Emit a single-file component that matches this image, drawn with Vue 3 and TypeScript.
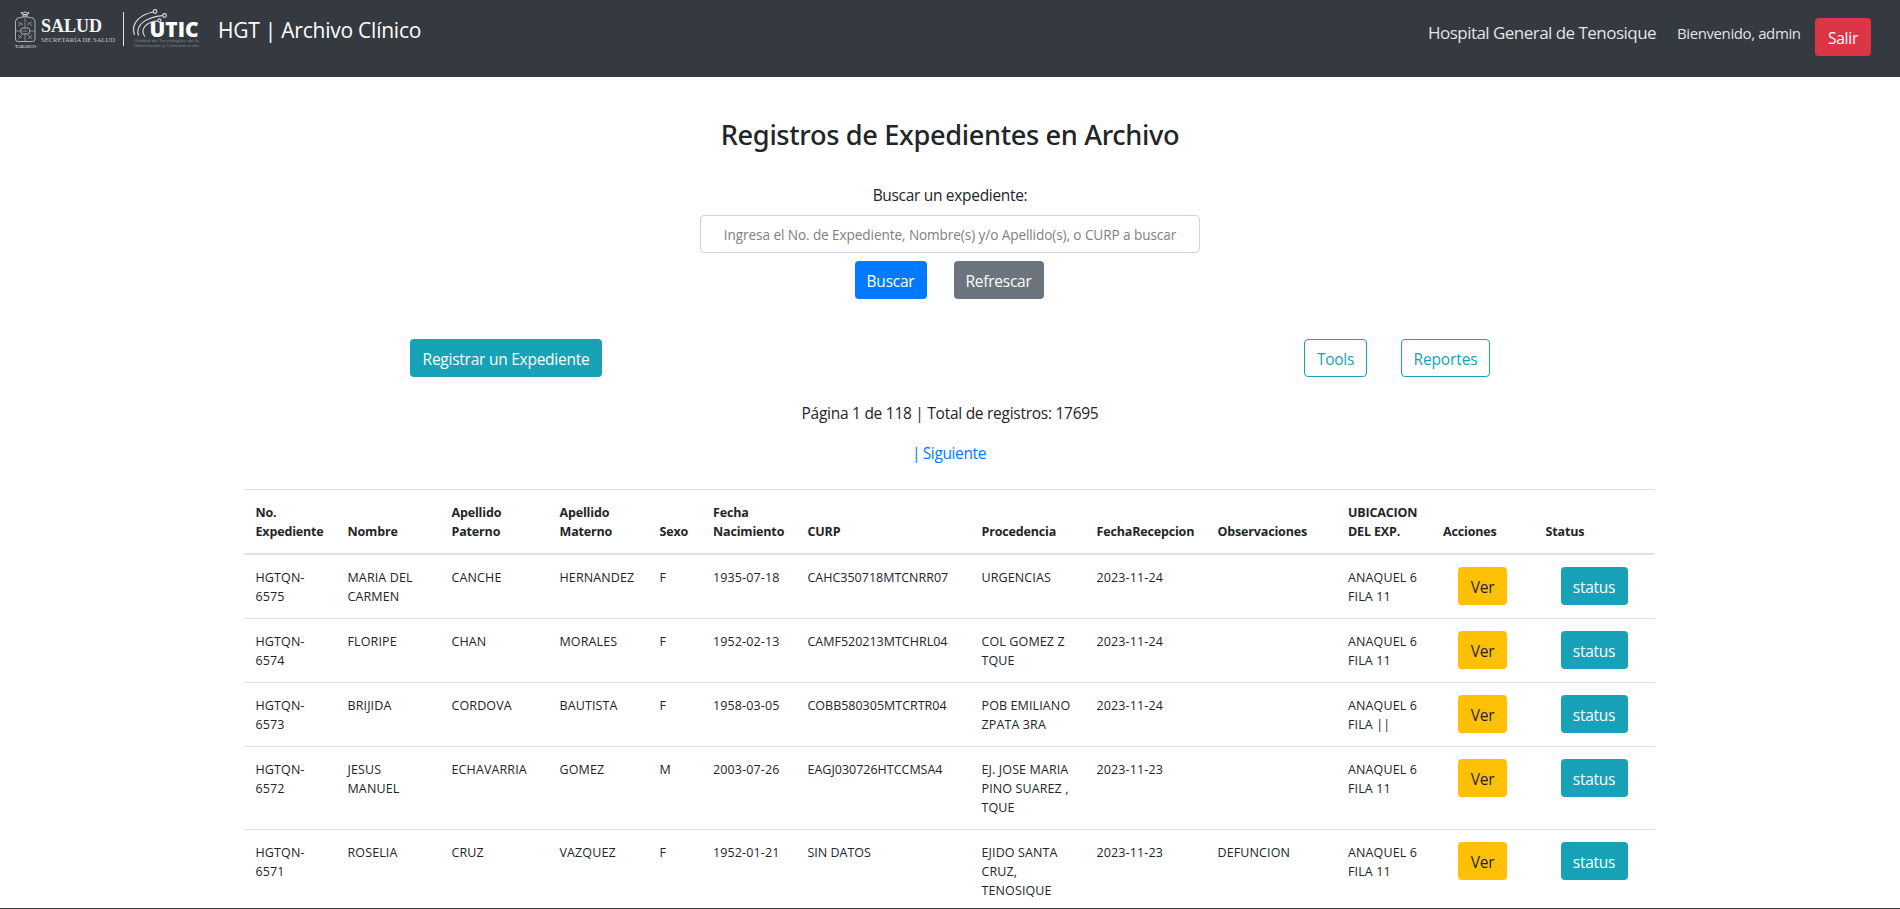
<script setup lang="ts">
interface Registro {
  expediente: string
  nombre: string
  paterno: string
  materno: string
  sexo: string
  nacimiento: string
  curp: string
  procedencia: string
  recepcion: string
  observaciones: string
  ubicacion: string
}

const columnas: string[] = [
  'No.\nExpediente',
  'Nombre',
  'Apellido\nPaterno',
  'Apellido\nMaterno',
  'Sexo',
  'Fecha\nNacimiento',
  'CURP',
  'Procedencia',
  'FechaRecepcion',
  'Observaciones',
  'UBICACION\nDEL EXP.',
  'Acciones',
  'Status',
]

const registros: Registro[] = [
  { expediente: 'HGTQN-\n6575', nombre: 'MARIA DEL\nCARMEN', paterno: 'CANCHE', materno: 'HERNANDEZ', sexo: 'F', nacimiento: '1935-07-18', curp: 'CAHC350718MTCNRR07', procedencia: 'URGENCIAS', recepcion: '2023-11-24', observaciones: '', ubicacion: 'ANAQUEL 6\nFILA 11' },
  { expediente: 'HGTQN-\n6574', nombre: 'FLORIPE', paterno: 'CHAN', materno: 'MORALES', sexo: 'F', nacimiento: '1952-02-13', curp: 'CAMF520213MTCHRL04', procedencia: 'COL GOMEZ Z\nTQUE', recepcion: '2023-11-24', observaciones: '', ubicacion: 'ANAQUEL 6\nFILA 11' },
  { expediente: 'HGTQN-\n6573', nombre: 'BRIJIDA', paterno: 'CORDOVA', materno: 'BAUTISTA', sexo: 'F', nacimiento: '1958-03-05', curp: 'COBB580305MTCRTR04', procedencia: 'POB EMILIANO\nZPATA 3RA', recepcion: '2023-11-24', observaciones: '', ubicacion: 'ANAQUEL 6\nFILA ||' },
  { expediente: 'HGTQN-\n6572', nombre: 'JESUS\nMANUEL', paterno: 'ECHAVARRIA', materno: 'GOMEZ', sexo: 'M', nacimiento: '2003-07-26', curp: 'EAGJ030726HTCCMSA4', procedencia: 'EJ. JOSE MARIA\nPINO SUAREZ ,\nTQUE', recepcion: '2023-11-23', observaciones: '', ubicacion: 'ANAQUEL 6\nFILA 11' },
  { expediente: 'HGTQN-\n6571', nombre: 'ROSELIA', paterno: 'CRUZ', materno: 'VAZQUEZ', sexo: 'F', nacimiento: '1952-01-21', curp: 'SIN DATOS', procedencia: 'EJIDO SANTA\nCRUZ,\nTENOSIQUE', recepcion: '2023-11-23', observaciones: 'DEFUNCION', ubicacion: 'ANAQUEL 6\nFILA 11' },
]

const campos: (keyof Registro)[] = [
  'expediente', 'nombre', 'paterno', 'materno', 'sexo', 'nacimiento',
  'curp', 'procedencia', 'recepcion', 'observaciones', 'ubicacion',
]
</script>

<template>
  <div class="app">
    <nav class="navbar">
      <svg class="logo" width="204" height="54" viewBox="0 0 204 54">
        <!-- Escudo -->
        <g fill="none" stroke="#b9bdc0" stroke-width="0.9">
          <path d="M21 12.5l1.5 2h5l1.5-2-2 .6-2-1.3-2 1.3zM22 16h6" stroke="#e3e5e6" />
          <path d="M17.5 18q7.500-2.500 15.500 0l2 3v18q0 2.500-2.500 2.500H18q-2.500 0-2.500-2.500V21z" />
          <path d="M25 18v23.500M15.500 31h19.500" stroke-width="0.6" />
          <rect x="21" y="28" width="8.5" height="6" rx="1.5" fill="#343a40" />
          <path d="M18 22l5 3m-5 1l4-3M27 25l5-3m-4 0l4 4M18 35l4 3m-4 1l4-4M28 35l4 4m-4 0l4-4M23 31h4" stroke-width="0.6" />
        </g>
        <text class="serif tabasco" x="15" y="47.6" textLength="21" lengthAdjust="spacingAndGlyphs">TABASCO</text>
        <text class="serif salud" x="41" y="32" textLength="61" lengthAdjust="spacingAndGlyphs">SALUD</text>
        <text class="serif secretaria" x="41" y="41.5" textLength="74" lengthAdjust="spacingAndGlyphs">SECRETARÍA DE SALUD</text>
        <rect x="123" y="12" width="1" height="34" fill="#dfe1e3" />
        <!-- Trazos de UTIC -->
        <g fill="none" stroke="#d5d8da" stroke-width="1.2">
          <path d="M134.500 35C130 22 142 14 153.200 12" />
          <path d="M138.500 35.500C135 25 146 17 162.700 15.600" />
          <path d="M145 36.500C139 29 147 21.500 158 20.800" />
          <circle cx="155" cy="11.5" r="1.800" />
          <circle cx="164.5" cy="15.5" r="1.800" />
          <circle cx="159.5" cy="20.5" r="1.600" />
        </g>
        <text class="utic" x="149.5" y="37" textLength="49" lengthAdjust="spacingAndGlyphs">UTIC</text>
        <text class="lema" x="134" y="42.3" textLength="65" lengthAdjust="spacingAndGlyphs">Unidad de Tecnologías de la</text>
        <text class="lema" x="134" y="47" textLength="65" lengthAdjust="spacingAndGlyphs">Información y Comunicación</text>
      </svg>
      <span class="brand">HGT | Archivo Clínico</span>
      <span class="hospital">Hospital General de Tenosique</span>
      <span class="welcome">Bienvenido, admin</span>
      <button class="btn btn-danger">Salir</button>
    </nav>

    <main class="main">
      <h3 class="title">Registros de Expedientes en Archivo</h3>

      <form class="search" @submit.prevent>
        <label class="search-label" for="buscar">Buscar un expediente:</label>
        <input id="buscar" class="search-input" type="text" placeholder="Ingresa el No. de Expediente, Nombre(s) y/o Apellido(s), o CURP a buscar" />
        <div class="search-actions">
          <button class="btn btn-primary">Buscar</button>
          <button class="btn btn-secondary">Refrescar</button>
        </div>
      </form>

      <div class="toolbar">
        <button class="btn btn-info btn-register">Registrar un Expediente</button>
        <div class="toolbar-right">
          <button class="btn btn-outline btn-tools">Tools</button>
          <button class="btn btn-outline btn-reports">Reportes</button>
        </div>
      </div>

      <p class="summary">Página 1 de 118 | Total de registros: 17695</p>
      <a class="next">| Siguiente</a>

      <table class="table">
        <colgroup>
          <col v-for="n in columnas.length" :key="n" :class="`c${n}`" />
        </colgroup>
        <thead>
          <tr>
            <th v-for="c in columnas" :key="c">{{ c }}</th>
          </tr>
        </thead>
        <tbody>
          <tr v-for="r in registros" :key="r.expediente">
            <td v-for="k in campos" :key="k" :class="k">{{ r[k] }}</td>
            <td class="action"><button class="btn btn-warning">Ver</button></td>
            <td class="action"><button class="btn btn-info btn-status">status</button></td>
          </tr>
        </tbody>
      </table>
    </main>
    <footer class="footer"></footer>
  </div>
</template>

<style>
body {
  margin: 0;
  background: #fff;
  overflow: hidden;
}
</style>

<style scoped>
.app {
  display: flex;
  flex-direction: column;
  height: 909px;
  overflow: hidden;
  font-family: "Open Sans", "Noto Sans", sans-serif;
  font-size: 15.5px;
  line-height: 24px;
  color: #212529;
  background: #fff;
}
.navbar {
  display: flex;
  align-items: flex-start;
  flex: none;
  height: 77px;
  padding-right: 29px;
  box-sizing: border-box;
  background: #343a40;
  color: #fff;
  white-space: nowrap;
}
.logo {
  flex: none;
}
.serif {
  font-family: "Liberation Serif", serif;
  fill: #f4f5f6;
}
.tabasco {
  font-size: 4.8px;
}
.salud {
  font-size: 18px;
  font-weight: 700;
}
.secretaria {
  font-size: 7px;
  fill: #c4c7ca;
}
.utic {
  font-family: "Open Sans", sans-serif;
  font-size: 21px;
  font-weight: 800;
  fill: #fff;
}
.lema {
  font-family: "Liberation Sans", sans-serif;
  font-size: 4.2px;
  fill: #7b8086;
}
.brand {
  margin: 15px auto 0 14px;
  width: 205px;
  font-size: 21px;
  line-height: 30px;
  letter-spacing: -0.24px;
}
.hospital {
  width: 249px;
  margin-top: 21px;
  font-size: 17px;
  letter-spacing: -0.53px;
  color: rgba(255, 255, 255, 0.88);
}
.welcome {
  width: 138px;
  margin-top: 21px;
  font-size: 15px;
  letter-spacing: -0.4px;
  color: rgba(255, 255, 255, 0.88);
}
.btn {
  box-sizing: border-box;
  height: 38px;
  padding: 2px 0 0;
  border: 1px solid transparent;
  border-radius: 4px;
  font-family: inherit;
  font-size: 15.5px;
  line-height: 24px;
  letter-spacing: -0.25px;
  text-align: center;
  white-space: nowrap;
  color: #fff;
}
.btn-danger {
  width: 56px;
  margin-top: 18px;
  background: #dc3545;
}
.btn-primary {
  width: 72px;
  background: #007bff;
}
.btn-secondary {
  width: 90px;
  background: #6c757d;
}
.btn-info {
  background: #17a2b8;
}
.btn-register {
  width: 192px;
}
.btn-outline {
  background: transparent;
  border-color: #17a2b8;
  color: #17a2b8;
}
.btn-tools {
  width: 63px;
}
.btn-reports {
  width: 89px;
  letter-spacing: -0.14px;
}
.btn-warning {
  width: 49px;
  background: #ffc107;
  color: #212529;
}
.btn-status {
  width: 67px;
}
.main {
  display: flex;
  flex-direction: column;
  align-items: center;
  flex: 1;
  min-height: 0;
  overflow: hidden;
}
.title {
  flex: none;
  margin: 41px 0 0;
  font-family: "Noto Sans", sans-serif;
  font-size: 27.2px;
  font-weight: 500;
  line-height: 34px;
  letter-spacing: -0.35px;
}
.search {
  display: flex;
  flex-direction: column;
  align-items: center;
  flex: none;
  margin-top: 31px;
}
.search-label {
  letter-spacing: -0.31px;
}
.search-input {
  box-sizing: border-box;
  width: 500px;
  height: 38px;
  margin-top: 8px;
  padding: 3px 12px;
  border: 1px solid #ced4da;
  border-radius: 4px;
  font-family: inherit;
  font-size: 13.6px;
  letter-spacing: -0.09px;
  text-align: center;
}
.search-input::placeholder {
  color: #808080;
  opacity: 1;
}
.search-actions {
  display: flex;
  gap: 27px;
  margin-top: 8px;
  padding-right: 2px;
}
.toolbar {
  display: flex;
  justify-content: space-between;
  flex: none;
  width: 1080px;
  margin-top: 40px;
}
.toolbar-right {
  display: flex;
  gap: 34px;
}
.summary {
  margin: 24px 0 0;
  letter-spacing: -0.27px;
}
.next {
  margin-top: 16px;
  padding-right: 2px;
  letter-spacing: -0.38px;
  word-spacing: -1px;
  color: #007bff;
}
.table {
  flex: none;
  width: 1411px;
  margin-top: 24px;
  margin-right: 2px;
  border-collapse: separate;
  border-spacing: 0;
  table-layout: fixed;
  font-size: 12.5px;
  line-height: 19.2px;
  letter-spacing: 0.12px;
}
.c1 { width: 92px; }
.c2 { width: 104px; }
.c3 { width: 108px; }
.c4 { width: 100px; }
.c5 { width: 53.5px; }
.c6 { width: 94.5px; }
.c7 { width: 174px; }
.c8 { width: 115px; }
.c9 { width: 121px; }
.c10 { width: 130.5px; }
.c11 { width: 95px; }
.c12 { width: 102.5px; }
.c13 { width: 121px; }
.table th,
.table td {
  box-sizing: border-box;
  padding: 12px 0 12px 12px;
  border-top: 1px solid #dee2e6;
  text-align: left;
  white-space: pre;
}
.table th {
  height: 66px;
  border-bottom: 2px solid #dee2e6;
  font-weight: 700;
  letter-spacing: -0.16px;
  vertical-align: bottom;
}
.table td {
  height: 64px;
  padding: 13px 0 11px 12px;
  vertical-align: top;
}
.table tbody tr:first-child td {
  height: 63px;
  border-top: 0;
}
.table td.curp {
  letter-spacing: -0.01px;
}
.table td.action {
  padding: 12px 0 12px 27px;
}
.footer {
  flex: none;
  height: 1px;
  background: #343a40;
}
</style>
